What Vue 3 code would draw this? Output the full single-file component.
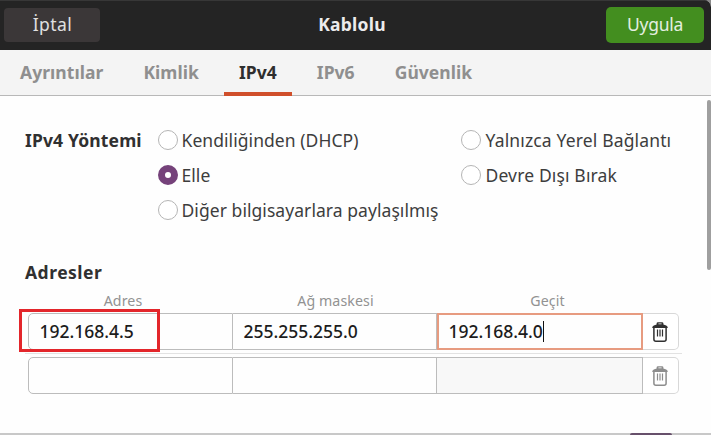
<script setup>
const tabs = ['Ayrıntılar', 'Kimlik', 'IPv4', 'IPv6', 'Güvenlik']
const left = ['Kendiliğinden (DHCP)', 'Elle', 'Diğer bilgisayarlara paylaşılmış']
const right = ['Yalnızca Yerel Bağlantı', 'Devre Dışı Bırak']
const rows = [
  { address: '192.168.4.5', mask: '255.255.255.0', gateway: '192.168.4.0' },
  { address: '', mask: '', gateway: '' }
]
</script>

<template>
  <div class="dialog">
    <header class="titlebar">
      <button class="cancel">İptal</button>
      <h1>Kablolu</h1>
      <button class="apply">Uygula</button>
    </header>
    <nav class="tabs">
      <a v-for="(tab, i) in tabs" :key="tab" :class="['tab', { active: i === 2 }]">{{ tab }}</a>
    </nav>
    <main class="content">
      <section class="method">
        <h2 class="method-title">IPv4 Yöntemi</h2>
        <div class="options">
          <label v-for="(o, i) in left" :key="o" class="option"><i :class="['radio', { on: i === 1 }]"></i><span>{{ o }}</span></label>
        </div>
        <div class="options second">
          <label v-for="o in right" :key="o" class="option"><i class="radio"></i><span>{{ o }}</span></label>
        </div>
      </section>
      <h2 class="addresses-title">Adresler</h2>
      <div class="heads">
        <span>Adres</span><span>Ağ maskesi</span><span>Geçit</span>
      </div>
      <div class="list">
        <div v-for="(row, i) in rows" :key="i" class="row">
          <div class="cell first">{{ row.address }}</div>
          <div class="cell">{{ row.mask }}</div>
          <div :class="['cell', i ? 'disabled' : 'focused']">{{ row.gateway }}<i v-if="!i" class="caret"></i></div>
          <button :class="['trash', { dim: i }]">
            <svg width="16" height="20" viewBox="0 0 16 20"><path d="M4.6 2.6V1.6Q4.6 0.2 6 0.2H10Q11.4 0.2 11.4 1.6V2.6L14.2 3.4Q15.8 4 15.8 6H0.2Q0.2 4 1.8 3.4ZM6.4 1.6V2.2H9.6V1.6Z" fill="currentColor" fill-rule="evenodd" /><path d="M1.9 6V17.2Q1.9 19.2 3.9 19.2H12.1Q14.1 19.2 14.1 17.2V6" fill="none" stroke="currentColor" stroke-width="1.5" /><path d="M5.5 7.6V14.6M8 7.6V14.6M10.5 7.6V14.6" stroke="currentColor" stroke-width="1.2" /></svg>
          </button>
        </div>
        <i class="separator"></i>
        <div class="highlight"></div>
      </div>
    </main>
    <i class="scrollbar"></i>
    <footer class="bottom-edge"><i class="bottom-button"></i></footer>
  </div>
</template>

<style>
body { margin: 0; background: #8b8b8b; overflow: hidden; }
</style>
<style scoped>
* { box-sizing: border-box; }
.dialog { position: relative; display: flex; flex-direction: column; width: 711px; height: 435px; overflow: hidden; background: #fefefe; border-radius: 0 7px 0 0; font: 17.5px/24px "Noto Sans", "Open Sans", sans-serif; color: #3d3d3d; white-space: nowrap; }
button { font: inherit; padding: 0; margin: 0; border: 0; }
h1, h2 { margin: 0; font-size: 17.5px; line-height: 24px; font-weight: 700; color: #303030; }
.titlebar { flex: none; height: 50px; background: #242424; border-top: 1px solid #373737; display: flex; align-items: center; justify-content: space-between; padding: 0 7px 1px 4px; }
.titlebar h1 { color: #ececec; letter-spacing: .25px; padding-bottom: 2px; margin-left: -2px; }
.cancel { width: 96px; height: 34px; border-radius: 4px; background: #3b3738; color: #e0e0e0; padding: 0 0 2px 1px; letter-spacing: .45px; }
.apply { width: 98px; height: 36px; border-radius: 5px; background: #438e1f; color: #e4efe0; padding-bottom: 2px; letter-spacing: -.3px; }
.tabs { flex: none; height: 46px; background: #f4f4f4; border-bottom: 1px solid #b8b8b8; display: flex; gap: 10px; padding-left: 5px; }
.tab { height: 46px; padding: 10px 15px 0; font-weight: 700; color: #8f8f8f; letter-spacing: .05px; }
.tab.active { color: #2e2e2e; border-bottom: 4px solid #d04f2b; }
.content { flex: 1; padding: 32px 29px 0 25px; }
.method { display: flex; height: 132px; }
.method-title { flex: none; width: 133px; letter-spacing: .15px; }
.options { flex: none; display: flex; flex-direction: column; gap: 11px; width: 302.5px; letter-spacing: .06px; }
.second { width: 220px; letter-spacing: .15px; }
.option { height: 24px; display: flex; align-items: center; gap: 3.5px; }
.second .option { gap: 5px; }
.option span { padding-bottom: 1px; }
.radio { width: 20px; height: 20px; border: 1.5px solid #b5b5b5; border-radius: 50%; flex: none; background: #fff; }
.radio.on { border: 7px solid #75427a; }
.addresses-title { letter-spacing: .5px; }
.heads { display: grid; grid-template-columns: 212px 213px 211px; margin-left: -8px; height: 29px; padding-top: 8px; text-align: center; font-size: 14.2px; line-height: 18px; color: #929292; letter-spacing: .1px; }
.list { position: relative; }
.row { display: grid; grid-template-columns: 205px 204px 206px 36px; height: 37px; margin-left: 3px; color: #1c1c1c; }
.row + .row { margin-top: 7px; }
.cell { border: 1px solid #bcbcbc; border-left-width: 0; display: flex; align-items: center; padding: 0 0 1px 10.5px; font-weight: 500; }
.first { border-left-width: 1px; border-radius: 5px 0 0 5px; }
.focused { border: 2px solid #e79b80; padding-left: 9.5px; }
.disabled { background: #f8f8f8; }
.caret { width: 1px; height: 21px; background: #111; }
.trash { border: 1px solid #d8d8d8; border-left: 0; border-radius: 0 5px 5px 0; background: #fff; color: #303030; display: grid; place-items: center; padding-right: 2px; }
.trash svg { display: block; }
.dim { color: #8d8d8d; }
.separator { position: absolute; left: 0; top: 40px; width: 657px; height: 1px; background: #e2e2e2; }
.highlight { position: absolute; left: -6px; top: -4px; width: 141px; height: 43px; border: 3px solid #e3262b; }
.scrollbar { position: absolute; left: 707px; top: 100px; width: 4px; height: 170px; border-radius: 2px; background: #9f9f9f; }
.bottom-edge { flex: none; height: 2px; background: #c8c8c8; padding-left: 630px; }
.bottom-button { display: block; width: 42px; height: 2px; background: #67506b; border-radius: 2px 2px 0 0; }
</style>
